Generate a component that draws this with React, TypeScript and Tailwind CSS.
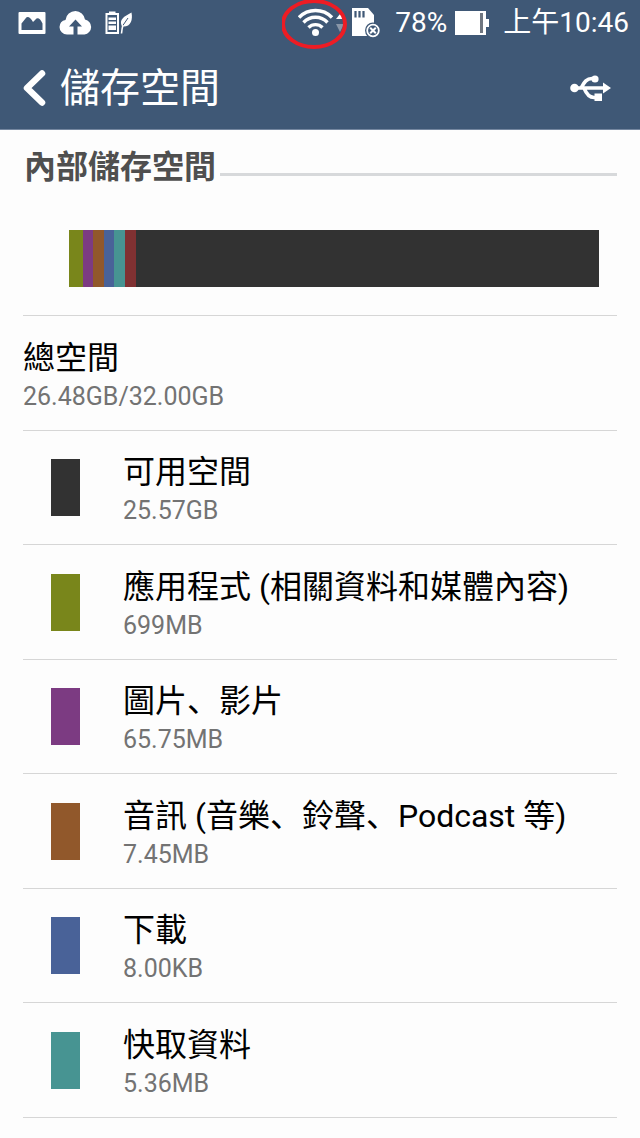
const categories = [
  { name: "可用空間", size: "25.57GB", color: "bg-[#323232]" },
  { name: "應用程式 (相關資料和媒體內容)", size: "699MB", color: "bg-[#79861b]" },
  { name: "圖片、影片", size: "65.75MB", color: "bg-[#7c3b82]" },
  { name: "音訊 (音樂、鈴聲、Podcast 等)", size: "7.45MB", color: "bg-[#91582b]" },
  { name: "下載", size: "8.00KB", color: "bg-[#496298]" },
  { name: "快取資料", size: "5.36MB", color: "bg-[#479492]" },
];

function StatusBar() {
  return (
    <div className="flex h-[46px] items-center justify-between pr-[11px] pl-[18px] text-[28px] leading-none">
      {/* notifications */}
      <div className="flex items-center gap-[13px] pb-px">
        <svg width="28" height="24" viewBox="0 0 28 24" fill="none">
          <path fill="#fff" fillRule="evenodd" d="M1.500 1h25a1 1 0 0 1 1 1v20a1 1 0 0 1-1 1h-25a1 1 0 0 1-1-1V2a1 1 0 0 1 1-1zM3.500 19h21v-6.500Q21.500 6 18.500 7.500l-3.500 3.500Q10.500 3.500 7.500 7.500l-4 5z" />
        </svg>
        <svg width="33" height="24" viewBox="0 0 33 24">
          <path fill="#fff" d="M8 23.500A7.500 7.500 0 0 1 .5 16a7.500 7.500 0 0 1 6-7A10 10 0 0 1 16.500 0a10 10 0 0 1 9.500 8.500 7.600 7.600 0 0 1-.5 15H18.500V15.500H23L16.500 8.500 10 15.500h4.500v8z" />
        </svg>
        <svg width="28" height="24" viewBox="0 0 28 24">
          <path fill="#fff" fillRule="evenodd" d="M4 2V.5h6.500V2H14v21H.5V2zM2.500 4v17H12V4z" />
          <path fill="#fff" d="M3.500 6.500h7.500v2.500H3.500zM3.500 10.500h7.500v2.500H3.500zM3.500 14.500h7.500v4.500H3.500z" />
          <path fill="#fff" d="M26.500 1.500c1.500 8-1 15-9.500 14-3.500-7 2-10 9.500-14z" />
          <path fill="none" stroke="#3f5876" strokeWidth="1" d="M17.500 15l5.500-8" />
          <path fill="none" stroke="#fff" strokeWidth="1.600" d="M18 14q-1 3-1.500 8.500" />
        </svg>
      </div>

      {/* system icons */}
      <div className="flex items-center">
        <div className="relative">
          <svg width="46" height="30" viewBox="0 0 46 30" fill="none">
            <g stroke="#fff" strokeWidth="3.400">
              <path d="M1 9.500a23 23 0 0 1 33 0" />
              <path d="M5.500 14.500a16.500 16.500 0 0 1 24 0" />
              <path d="M10.500 19.500a10 10 0 0 1 14 0" />
            </g>
            <circle cx="17.500" cy="24.500" r="3.500" fill="#fff" />
            <path fill="#fff" d="M38 11l4-5 4 5z" />
            <path fill="#8996a8" d="M38 16h8l-4 8z" />
          </svg>
          <svg className="absolute -top-[9px] -left-4" width="66" height="50" viewBox="0 0 66 50" fill="none">
            <ellipse cx="32" cy="25" rx="31" ry="23" stroke="#ed1c24" strokeWidth="4" />
          </svg>
        </div>
        <svg className="mr-[15px] ml-[7px]" width="29" height="30" viewBox="0 0 29 30">
          <path fill="#fff" d="M1 0h16l6 7v21H1z" />
          <path stroke="#3f5876" strokeWidth="2.200" d="M4.500 3v6.500M8.500 3v6.500M12.500 3v6.500" />
          <circle cx="22" cy="22.500" r="8" fill="#3f5876" />
          <circle cx="22" cy="22.500" r="5.800" fill="#3f5876" stroke="#fff" strokeWidth="1.800" />
          <path stroke="#fff" strokeWidth="2" d="M19.200 19.700l5.600 5.600M24.800 19.700l-5.600 5.600" />
        </svg>
        <span>78%</span>
        <svg className="mr-[14px] ml-2" width="34" height="24" viewBox="0 0 34 24">
          <path fill="#fff" d="M0 0h31v8h3v8h-3v8H0z" />
          <path fill="#6f7680" d="M25 2h3v20h-3z" />
        </svg>
        <time>上午10:46</time>
      </div>
    </div>
  );
}

function Header() {
  return (
    <header className="border-b border-[#7587a0] bg-[#3f5876] text-white">
      <StatusBar />
      <div className="flex h-[83px] items-center justify-between pr-[29px] pl-[23px]">
        <div className="flex items-center gap-[13px]">
          <button type="button" aria-label="返回">
            <svg width="24" height="38" viewBox="0 0 24 38" fill="none" stroke="#fff" strokeWidth="6.500" strokeLinecap="round" strokeLinejoin="round">
              <path d="M19 4.500L4 19l15 14.500" />
            </svg>
          </button>
          <h1 className="pt-[3px] text-[40px] leading-none">儲存空間</h1>
        </div>
        <button type="button" aria-label="USB">
          <svg width="41" height="28" viewBox="0 0 41 28" fill="none">
            <path stroke="#fff" strokeWidth="3.600" d="M4 14h30M11 14c3-5 5-9.500 11-9.500h3M14 14c2 5 5 9.500 10 9.500h4" />
            <circle cx="4.500" cy="14" r="4.300" fill="#fff" />
            <circle cx="25" cy="5" r="3.600" fill="#fff" />
            <path fill="#fff" d="M24.500 19.500h7.500v7.500h-7.500zM33 8.500l8 5.500-8 5.500z" />
          </svg>
        </button>
      </div>
    </header>
  );
}

export default function App() {
  return (
    <div className="min-h-screen bg-[#fdfdfd] font-['Roboto','Noto_Sans_CJK_TC',sans-serif]" lang="zh-TW">
      <Header />

      <main className="px-[23px]">
        <div className="flex h-[74px] items-center gap-1 pl-px">
          <h2 className="text-[32px] leading-none font-bold text-[#4f4f4f]">內部儲存空間</h2>
          <div className="mt-[14px] h-[3px] flex-1 bg-[#d7d9db]" />
        </div>

        {/* usage bar */}
        <div className="mt-[26px] mr-[18px] mb-7 ml-[46px] flex h-[57px]">
          <div className="w-[14px] bg-[#79861b]" />
          <div className="w-[10px] bg-[#7c3b82]" />
          <div className="w-[11px] bg-[#91582b]" />
          <div className="w-[10px] bg-[#496298]" />
          <div className="w-[11px] bg-[#479492]" />
          <div className="w-[11px] bg-[#803132]" />
          <div className="flex-1 bg-[#323232]" />
        </div>

        <ul className="border-t border-[#d6d6d6]">
          <li className="flex h-[115px] flex-col justify-center border-b border-[#d6d6d6] pt-[7px]">
            <p className="text-[32px] leading-10 text-black">總空間</p>
            <p className="text-[25px] leading-[38px] text-[#737373]">26.48GB/32.00GB</p>
          </li>
          {categories.map((item) => (
            <li key={item.name} className="flex h-[115px] items-center border-b border-[#d6d6d6] pl-7 even:h-[114px]">
              <div className={`h-[57px] w-[29px] ${item.color}`} />
              <div className="ml-[43px] pt-[7px]">
                {/* the mainland face sets the comma at the lower left */}
                <p className="font-['Roboto','Noto_Sans_CJK_SC',sans-serif] text-[32px] leading-10 text-black" lang="zh-CN">
                  {item.name}
                </p>
                <p className="text-[25px] leading-[38px] text-[#737373]">{item.size}</p>
              </div>
            </li>
          ))}
        </ul>
      </main>
    </div>
  );
}
